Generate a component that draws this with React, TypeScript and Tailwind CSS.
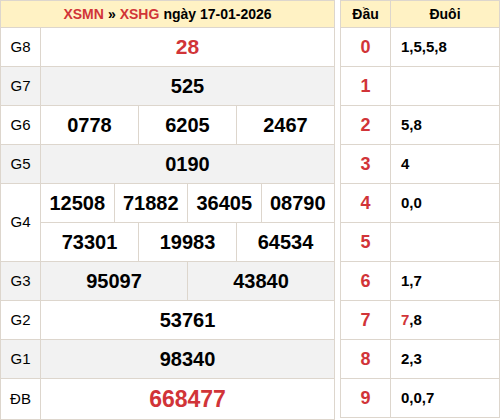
import React from 'react';

const RED = 'text-[#d13438]';

type Row = { label: string; values: string[][]; bg: boolean; cls?: string };

const rows: Row[] = [
  { label: 'G8', values: [['28']], bg: false, cls: `${RED} text-[21px]` },
  { label: 'G7', values: [['525']], bg: true },
  { label: 'G6', values: [['0778', '6205', '2467']], bg: false },
  { label: 'G5', values: [['0190']], bg: true },
  { label: 'G4', values: [['12508', '71882', '36405', '08790'], ['73301', '19983', '64534']], bg: false },
  { label: 'G3', values: [['95097', '43840']], bg: true },
  { label: 'G2', values: [['53761']], bg: false },
  { label: 'G1', values: [['98340']], bg: true },
  { label: 'ĐB', values: [['668477']], bg: false, cls: `${RED} text-[23px]` },
];

const loto: { d: string; t: React.ReactNode }[] = [
  { d: '0', t: '1,5,5,8' },
  { d: '1', t: '' },
  { d: '2', t: '5,8' },
  { d: '3', t: '4' },
  { d: '4', t: '0,0' },
  { d: '5', t: '' },
  { d: '6', t: '1,7' },
  { d: '7', t: <><span className={RED}>7</span>,8</> },
  { d: '8', t: '2,3' },
  { d: '9', t: '0,0,7' },
];

export default function App() {
  return (
    <div className="flex gap-[5px] bg-white font-['Liberation_Sans',Arial,sans-serif] text-black w-[500px] h-[420px]">
      {/* KQ table */}
      <div className="w-[335px] border border-[#ddd6cd] self-start">
        <div className="h-[27px] bg-[#fff2c4] border-b border-[#ddd6cd] flex items-center justify-center text-[14px] font-bold">
          <span className={RED}>XSMN</span>
          <span className="mx-1">»</span>
          <span className={RED}>XSHG</span>
          <span className="ml-1">ngày 17-01-2026</span>
        </div>
        {rows.map((r) => (
          <div key={r.label} className={`flex border-b last:border-b-0 border-[#ddd6cd] ${r.bg ? 'bg-[#f2f2f2]' : ''}`}>
            <div className="w-[40px] shrink-0 border-r border-[#ddd6cd] flex items-center justify-center text-[15px]">
              {r.label}
            </div>
            <div className="flex-1 flex flex-col">
              {r.values.map((line, i) => (
                <div key={i} className={`flex h-[38px] ${i > 0 ? 'border-t border-[#ddd6cd] h-[39px]' : ''} ${r.label === 'ĐB' ? 'h-[40px]' : ''}`}>
                  {line.map((v, j) => (
                    <div
                      key={j}
                      className={`flex-1 flex items-center justify-center font-bold ${r.cls ?? 'text-[20px]'} ${j > 0 ? 'border-l border-[#ddd6cd]' : ''}`}
                    >
                      {v}
                    </div>
                  ))}
                </div>
              ))}
            </div>
          </div>
        ))}
      </div>

      {/* Loto table */}
      <div className="w-[160px] border border-[#ddd6cd] self-start">
        <div className="h-[27px] bg-[#fff2c4] border-b border-[#ddd6cd] flex text-[14px] font-bold">
          <div className="w-[50px] border-r border-[#ddd6cd] flex items-center justify-center">Đầu</div>
          <div className="flex-1 flex items-center justify-center">Đuôi</div>
        </div>
        {loto.map((l) => (
          <div key={l.d} className="flex h-[39px] border-b last:border-b-0 last:h-[38px] border-[#ddd6cd]">
            <div className={`w-[50px] border-r border-[#ddd6cd] flex items-center justify-center font-bold text-[18px] ${RED}`}>
              {l.d}
            </div>
            <div className="flex-1 flex items-center pl-[10px] font-bold text-[15px]">{l.t}</div>
          </div>
        ))}
      </div>
    </div>
  );
}
